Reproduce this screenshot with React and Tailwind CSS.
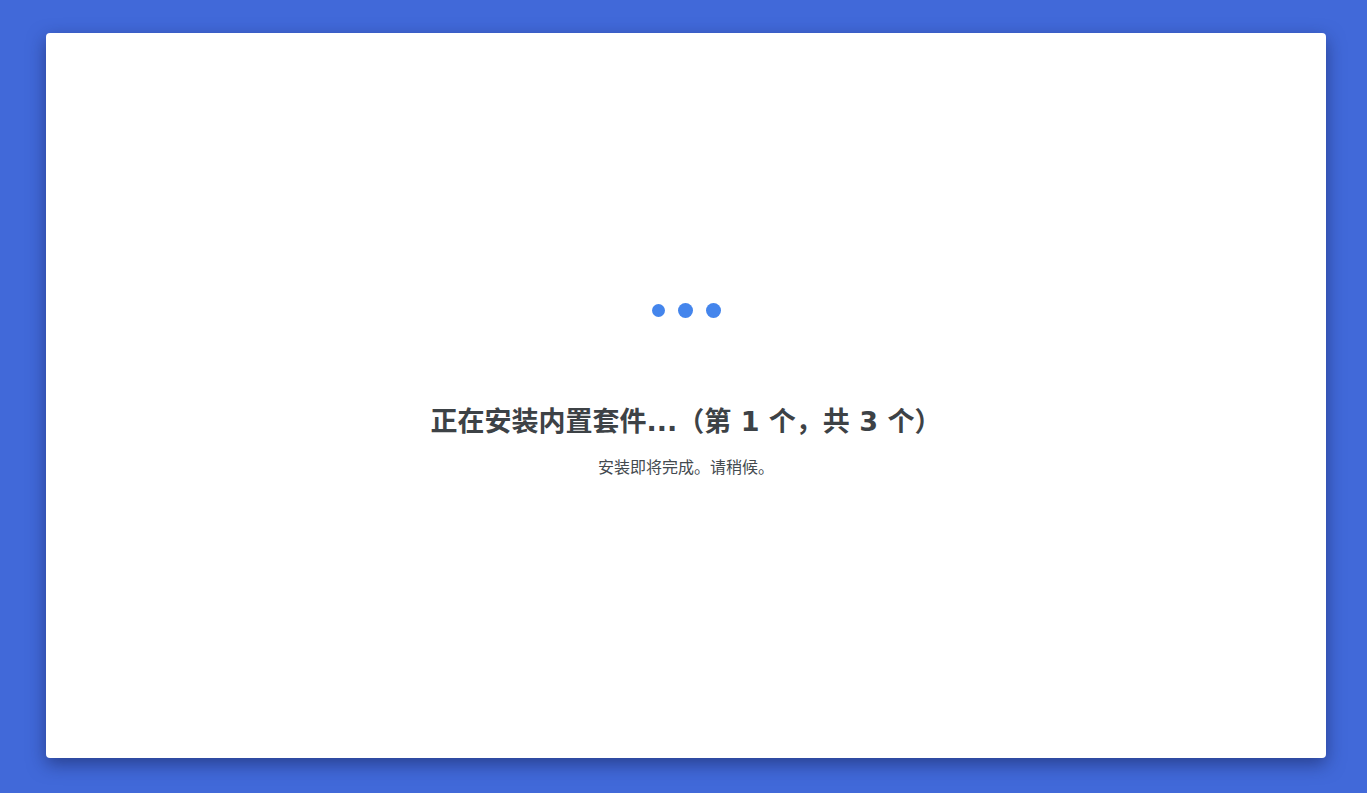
export default function App() {
  return (
    <div className="w-[1367px] h-[793px] bg-[#4169d9] overflow-hidden pt-[33px] pl-[46px]" style={{fontFamily: '"Noto Sans", "Noto Sans CJK SC", sans-serif'}}>
      <div className="w-[1280px] h-[725px] bg-white rounded-[4px] shadow-[0_6px_18px_rgba(20,30,80,0.55)] flex flex-col items-center">
        <div className="mt-[270px] flex items-center gap-[13px] h-[15px]">
          <span className="block w-[13px] h-[13px] rounded-full bg-[#4485ec]"></span>
          <span className="block w-[15px] h-[15px] rounded-full bg-[#4485ec]"></span>
          <span className="block w-[15px] h-[15px] rounded-full bg-[#4485ec]"></span>
        </div>
        <h1 className="mt-[86px] text-[27px] leading-[36px] font-bold text-[#3d4246]" style={{fontFamily: '"DejaVu Sans", "Noto Sans CJK SC", sans-serif'}}>正在安装内置套件...（第 1 个，共 3 个）</h1>
        <p className="mt-[16px] text-[16px] leading-[20px] text-[#444a4f]" style={{fontFamily: '"Noto Sans CJK SC", sans-serif'}}>安装即将完成。请稍候。</p>
      </div>
    </div>
  );
}
